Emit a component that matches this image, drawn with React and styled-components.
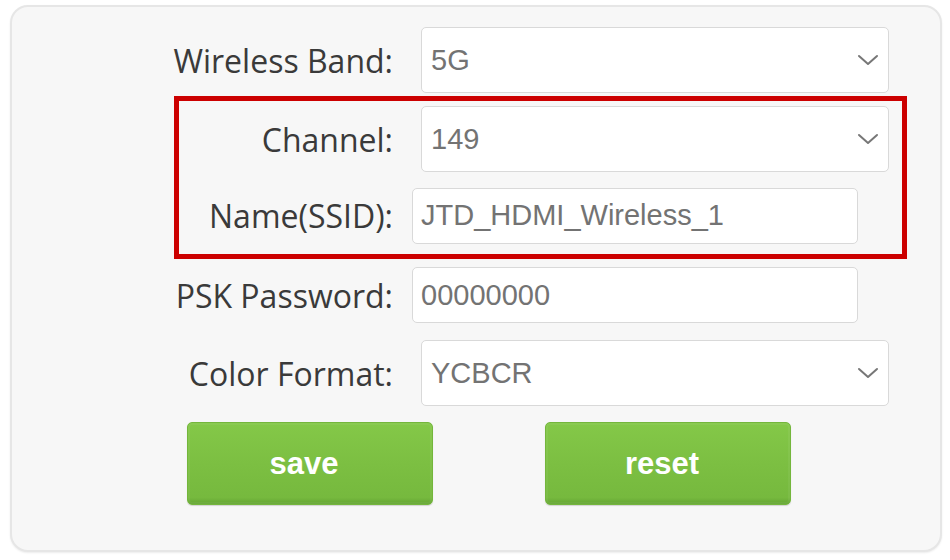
import styled, { createGlobalStyle } from 'styled-components';

const GlobalStyle = createGlobalStyle`
  html, body {
    margin: 0;
    padding: 0;
    background: #ffffff;
  }
  body {
    width: 950px;
    height: 560px;
    overflow: hidden;
  }
`;

const Page = styled.div`
  padding: 5px 8px 0 10px;
`;

const Panel = styled.form`
  width: 932px;
  height: 547px;
  box-sizing: border-box;
  background: #f7f7f7;
  border: 2px solid #e6e6e6;
  border-radius: 18px;
  box-shadow: 0 1px 2px rgba(0, 0, 0, 0.08);
  padding: 14px 51px 0 20px;
  display: flex;
  flex-direction: column;
`;

const Row = styled.div`
  display: flex;
  align-items: center;
  height: 78px;
`;

const Label = styled.label`
  flex: 1;
  text-align: right;
  padding-right: 19px;
  font-family: 'Open Sans', 'Noto Sans', sans-serif;
  font-size: 32px;
  color: #3a3a3a;
  white-space: nowrap;
`;

const Control = styled.div`
  width: 477px;
  display: flex;
`;

const SelectBox = styled.div`
  margin-left: 9px;
  width: 468px;
  height: 66px;
  box-sizing: border-box;
  background: #ffffff;
  border: 1px solid #d9d9d9;
  border-radius: 5px;
  display: flex;
  align-items: center;
  justify-content: space-between;
  padding: 0 8px 0 9px;
  font-family: 'Liberation Sans', Arial, sans-serif;
  font-size: 29px;
  color: #737373;
`;

const TextBox = styled.div`
  width: 446px;
  height: 56px;
  box-sizing: border-box;
  background: #ffffff;
  border: 1px solid #d9d9d9;
  border-radius: 5px;
  display: flex;
  align-items: center;
  padding: 0 8px;
  font-family: 'Liberation Sans', Arial, sans-serif;
  font-size: 29px;
  color: #737373;
`;

const Highlight = styled.div`
  border: 5px solid #cc0000;
  margin: -3px -18px -3px 142px;
  padding-right: 13px;

  & > ${Row} {
    height: 76.5px;
  }
`;

const Actions = styled.div`
  display: flex;
  gap: 112px;
  margin-top: 10px;
  padding-left: 155px;
`;

const Button = styled.button`
  width: 246px;
  height: 83px;
  border: 1px solid #74b63c;
  border-radius: 5px;
  background: linear-gradient(#84c848 0%, #7cbf42 50%, #76b93e 92%, #64a533 100%);
  box-shadow: inset 0 0 0 2px rgba(255, 255, 255, 0.05), 0 1px 1px rgba(0, 0, 0, 0.15);
  font-family: 'Liberation Sans', Arial, sans-serif;
  font-weight: bold;
  font-size: 31px;
  color: #ffffff;
  padding: 0 12px 0 0;
  cursor: pointer;
`;

const Chevron = () => (
  <svg width="24" height="14" viewBox="0 0 24 14" fill="none">
    <path d="M3 3 L12 11 L21 3" stroke="#777777" strokeWidth="2" strokeLinecap="round" strokeLinejoin="round" />
  </svg>
);

function SelectField({ label, value }) {
  return (
    <Row>
      <Label>{label}</Label>
      <Control>
        <SelectBox>
          <span>{value}</span>
          <Chevron />
        </SelectBox>
      </Control>
    </Row>
  );
}

function TextField({ label, value }) {
  return (
    <Row>
      <Label>{label}</Label>
      <Control>
        <TextBox>{value}</TextBox>
      </Control>
    </Row>
  );
}

export default function App() {
  return (
    <>
      <GlobalStyle />
      <Page>
        <Panel onSubmit={(e) => e.preventDefault()}>
          <SelectField label="Wireless Band:" value="5G" />
          <Highlight>
            <SelectField label="Channel:" value="149" />
            <TextField label="Name(SSID):" value="JTD_HDMI_Wireless_1" />
          </Highlight>
          <TextField label="PSK Password:" value="00000000" />
          <SelectField label="Color Format:" value="YCBCR" />
          <Actions>
            <Button type="button">save</Button>
            <Button type="button">reset</Button>
          </Actions>
        </Panel>
      </Page>
    </>
  );
}
